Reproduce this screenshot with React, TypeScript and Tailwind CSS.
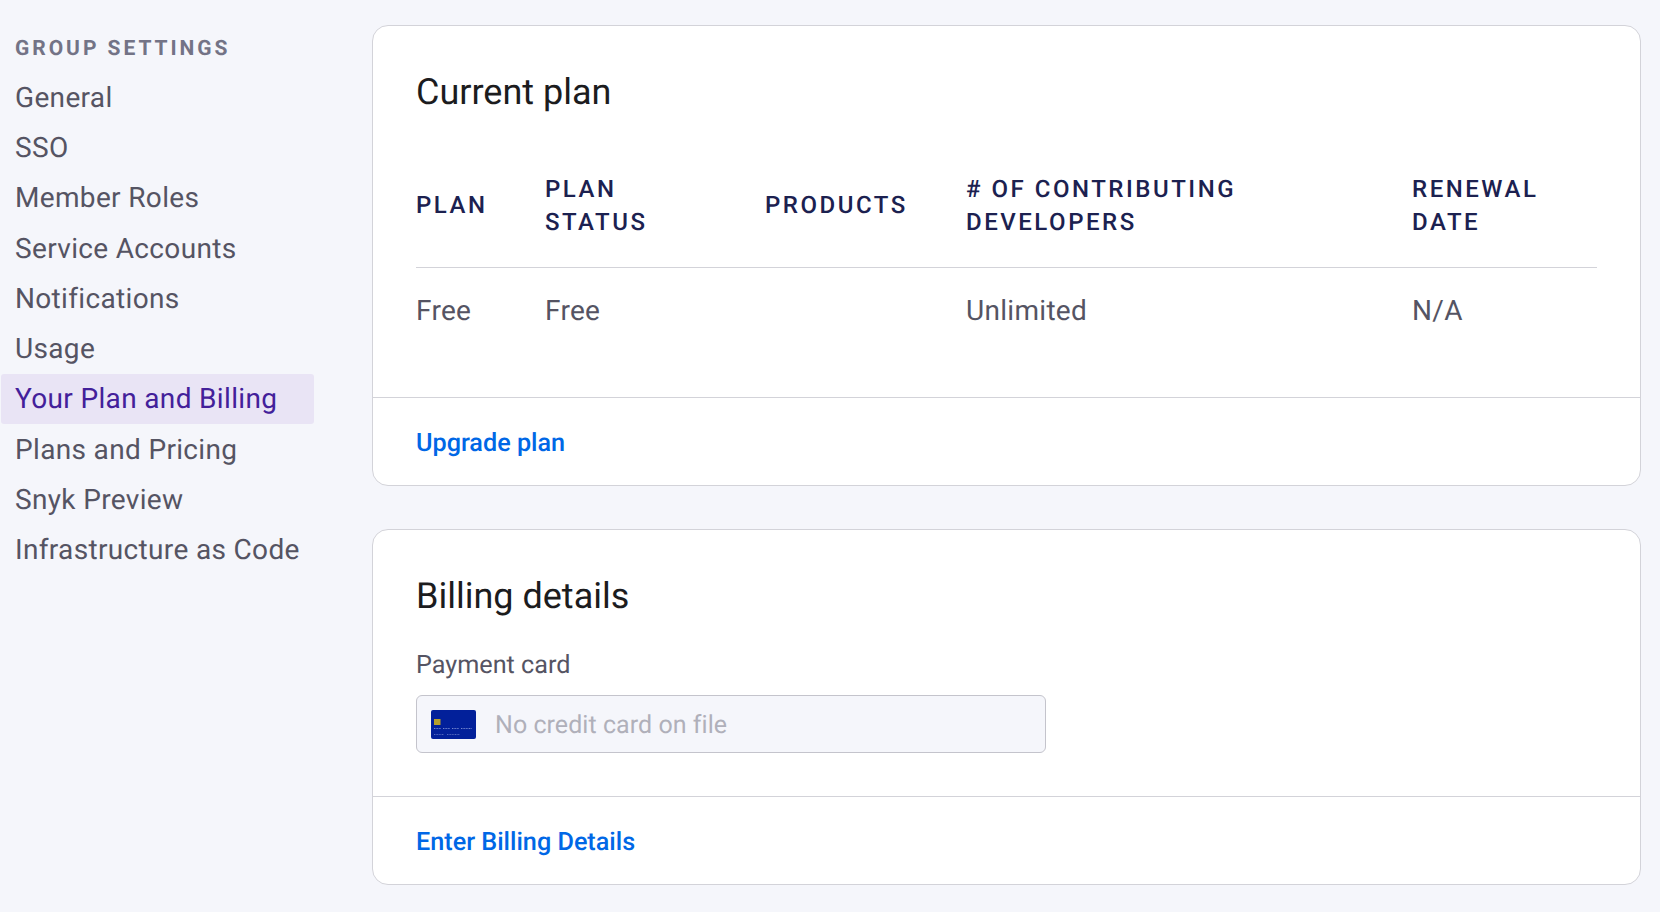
import React from "react";

const items = ["General", "SSO", "Member Roles", "Service Accounts", "Notifications", "Usage", "Your Plan and Billing", "Plans and Pricing", "Snyk Preview", "Infrastructure as Code"];

function CardIcon() {
  return (
    <svg width="45" height="29" viewBox="0 0 45 29" className="block shrink-0">
      <rect width="45" height="29" rx="2" fill="#02209a" />
      <rect x="3" y="9" width="6.5" height="6" fill="#b59f2b" />
      <path d="M3 18.5h7M12 18.5h7M21 18.5h7M30 18.5h11" stroke="#8f9fdc" strokeWidth="1" strokeDasharray="1 0.6" opacity="0.8" fill="none" />
      <path d="M3 24.5h10M16 24.5h13" stroke="#8f9fdc" strokeWidth="0.8" strokeDasharray="1 0.6" opacity="0.7" fill="none" />
    </svg>
  );
}

const thBase = "text-left align-middle font-medium text-[24px] leading-[33px] tracking-[2.52px] text-[#1c2150] border-b border-[#d3d3d9]";
const th = `${thBase} pb-[28px]`;
const thSingle = `${thBase} pb-[30px]`;
const td = "text-left align-top font-normal text-[28px] leading-[40px] tracking-[0.3px] text-[#555463] pt-[23px]";

export default function App() {
  return (
    <div className="min-h-[912px] bg-[#f5f6fb] flex font-['Roboto',sans-serif] overflow-hidden [text-rendering:geometricPrecision]">
      <nav className="w-[372px] shrink-0 pt-[33px] pl-[1px]">
        <div className="pl-[14px] text-[21px] leading-[32px] font-bold tracking-[2.95px] text-[#737386]">GROUP SETTINGS</div>
        <ul className="mt-[7px] w-[313px]">
          {items.map((t) => (
            <li
              key={t}
              className={`h-[50.3px] pl-[14px] pt-[1px] flex items-center text-[28px] tracking-[0.34px] rounded-[3px] ${t === "Your Plan and Billing" ? "bg-[#e9e4f5] text-[#43209a]" : "text-[#555463]"}`}
            >
              {t}
            </li>
          ))}
        </ul>
      </nav>
      <main className="w-[1269px] pt-[25px] flex flex-col gap-[43px]">
        <section className="h-[461px] bg-white border border-[#d3d3d9] rounded-[16px] flex flex-col">
          <div className="flex-1 px-[43px]">
            <h2 className="mt-[42px] text-[36px] leading-[48px] font-normal text-[#1c1c1e]">Current plan</h2>
            <table className="w-[1181px] mt-[57px] border-collapse table-fixed">
              <thead>
                <tr>
                  <th className={`${thSingle} w-[129px]`}>PLAN</th>
                  <th className={`${th} w-[220px]`}>PLAN<br />STATUS</th>
                  <th className={`${thSingle} w-[201px]`}>PRODUCTS</th>
                  <th className={`${th} w-[446px]`}># OF CONTRIBUTING<br />DEVELOPERS</th>
                  <th className={th}>RENEWAL<br />DATE</th>
                </tr>
              </thead>
              <tbody>
                <tr>
                  <td className={td}>Free</td>
                  <td className={td}>Free</td>
                  <td className={td}></td>
                  <td className={td}>Unlimited</td>
                  <td className={td}>N/A</td>
                </tr>
              </tbody>
            </table>
          </div>
          <div className="h-[88px] border-t border-[#d3d3d9] px-[43px] pt-[4px] flex items-center text-[25.2px] font-medium text-[#0067e6]">Upgrade plan</div>
        </section>
        <section className="h-[356px] bg-white border border-[#d3d3d9] rounded-[16px] flex flex-col">
          <div className="flex-1 px-[43px]">
            <h2 className="mt-[42px] text-[36px] leading-[48px] font-normal text-[#1c1c1e]">Billing details</h2>
            <div className="mt-[28px] text-[25.2px] leading-[36px] text-[#555463]">Payment card</div>
            <div className="mt-[11px] w-[630px] h-[58px] bg-[#f5f6fb] border border-[#c4c4cc] rounded-[6px] flex items-center pl-[14px] gap-[19px]">
              <CardIcon />
              <span className="pt-[3px] text-[25px] text-[#b0b0ba] tracking-[0.05px]">No credit card on file</span>
            </div>
          </div>
          <div className="h-[88px] border-t border-[#d3d3d9] px-[43px] pt-[4px] flex items-center text-[25.2px] font-medium text-[#0067e6]">Enter Billing Details</div>
        </section>
      </main>
    </div>
  );
}
